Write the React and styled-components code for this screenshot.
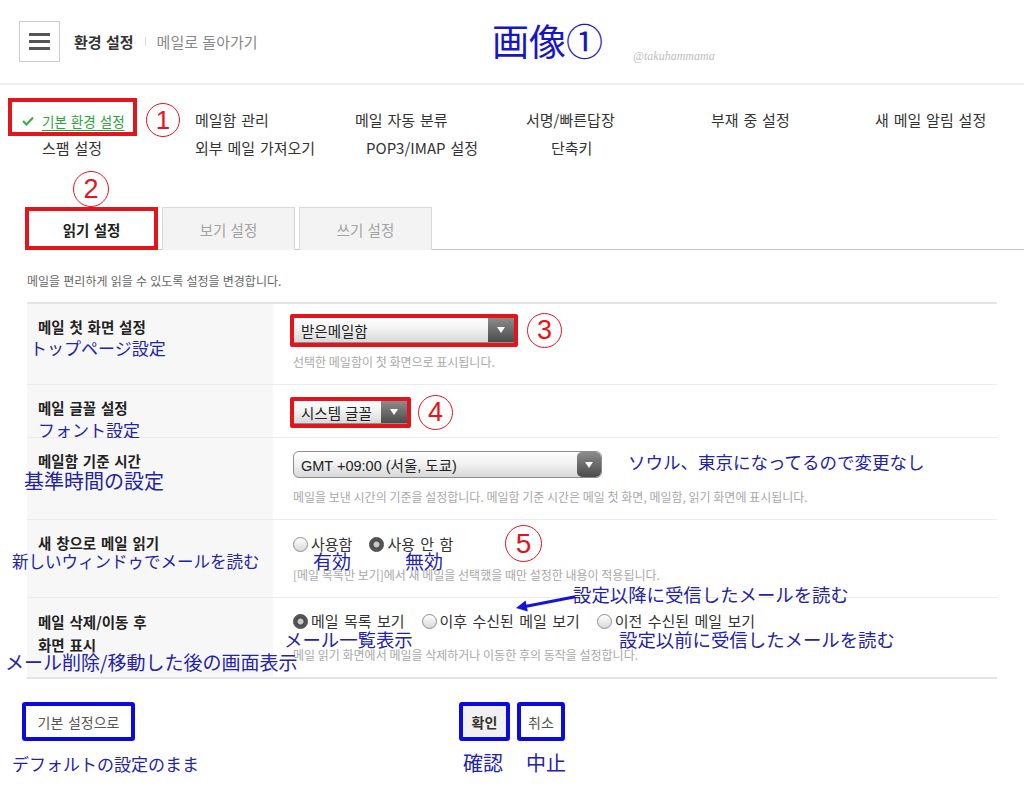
import React from "react"
import styled, { createGlobalStyle, css } from "styled-components"

const RED = "#e3141c"
const NOTE = "#2323a8"
const FRAME_BLUE = "#0a0ae0"

const GlobalStyle = createGlobalStyle`
  html, body { margin: 0; padding: 0; background: #fff; }
  body { font-family: "Noto Sans CJK KR", "Noto Sans", sans-serif; color: #333; }
  * { box-sizing: border-box; }
`

const navRows = [
  [
    { label: "기본 환경 설정", indent: 22, current: true },
    { label: "메일함 관리" },
    { label: "메일 자동 분류" },
    { label: "서명/빠른답장" },
    { label: "부재 중 설정" },
    { label: "새 메일 알림 설정" },
  ],
  [
    { label: "스팸 설정", indent: 42 },
    { label: "외부 메일 가져오기" },
    { label: "POP3/IMAP 설정", indent: 11 },
    { label: "단축키", indent: 25 },
  ],
]

export default function App() {
  return (
    <Page>
      <GlobalStyle />
      <Header>
        <MenuButton>
          <span />
          <span />
          <span />
        </MenuButton>
        <HeaderTitle>환경 설정</HeaderTitle>
        <HeaderSep />
        <BackLink>메일로 돌아가기</BackLink>
        <PageMark>画像①</PageMark>
        <Handle>@takuhammama</Handle>
      </Header>

      <Nav>
        {navRows.map((row, r) =>
          row.map((item, i) => (
            <NavItem key={`${r}-${i}`} $indent={item.indent || 0}>
              {item.current ? (
                <Current>
                  <svg width="12" height="10" viewBox="0 0 12 10">
                    <polyline points="1,5 4.5,8.5 11,1.5" fill="none" stroke="#3aa84a" strokeWidth="2" />
                  </svg>
                  <u>{item.label}</u>
                  <Circled $x={124} $y={-4} $size={34}>1</Circled>
                </Current>
              ) : (
                item.label
              )}
            </NavItem>
          ))
        )}
      </Nav>

      <TabBar>
        <Tab $active $marked>
          읽기 설정
          <Circled $x={47} $y={-37} $size={36}>2</Circled>
        </Tab>
        <Tab>보기 설정</Tab>
        <Tab>쓰기 설정</Tab>
      </TabBar>

      <Description>메일을 편리하게 읽을 수 있도록 설정을 변경합니다.</Description>

      <Table>
        <Row>
          <LabelCell>메일 첫 화면 설정</LabelCell>
          <ValueCell>
            <Framed>
              <Select $w={222} $h={26}>
                <SelectText>받은메일함</SelectText>
                <SelectArrow />
              </Select>
            </Framed>
            <Help $mt={10}>선택한 메일함이 첫 화면으로 표시됩니다.</Help>
          </ValueCell>
          <Note $x={3} $y={32} $size={17}>トップページ設定</Note>
          <Circled $x={500} $y={9} $size={35}>3</Circled>
        </Row>

        <Row>
          <LabelCell>메일 글꼴 설정</LabelCell>
          <ValueCell>
            <Framed $mt={2}>
              <Select $w={115} $h={24}>
                <SelectText>시스템 글꼴</SelectText>
                <SelectArrow />
              </Select>
            </Framed>
          </ValueCell>
          <Note $x={11} $y={33} $size={17}>フォント設定</Note>
          <Circled $x={391} $y={10} $size={35}>4</Circled>
        </Row>

        <Row>
          <LabelCell>메일함 기준 시간</LabelCell>
          <ValueCell>
            <Select $w={309} $h={27} $radius={6}>
              <SelectText>GMT +09:00 (서울, 도쿄)</SelectText>
              <SelectArrow $round />
            </Select>
            <Help $mt={10}>
              메일을 보낸 시간의 기준을 설정합니다. 메일함 기준 시간은 메일 첫 화면, 메일함, 읽기 화면에 표시됩니다.
            </Help>
          </ValueCell>
          <Note $x={-3} $y={31} $size={20}>基準時間の設定</Note>
          <Note $x={601} $y={12} $size={17.5}>ソウル、東京になってるので変更なし</Note>
        </Row>

        <Row>
          <LabelCell>새 창으로 메일 읽기</LabelCell>
          <ValueCell>
            <RadioGroup $mt={2}>
              <Radio>
                <RadioDot />
                사용함
              </Radio>
              <Radio>
                <RadioDot $checked />
                사용 안 함
              </Radio>
            </RadioGroup>
            <Help $mt={13}>[메일 목록만 보기]에서 새 메일을 선택했을 때만 설정한 내용이 적용됩니다.</Help>
          </ValueCell>
          <Note $x={-15} $y={29} $size={16.5}>新しいウィンドゥでメールを読む</Note>
          <Note $x={286} $y={29} $size={19}>有効</Note>
          <Note $x={378} $y={29} $size={19}>無効</Note>
          <Circled $x={478} $y={5} $size={37}>5</Circled>
        </Row>

        <Row>
          <LabelCell $pt={12}>
            메일 삭제/이동 후
            <br />
            화면 표시
          </LabelCell>
          <ValueCell>
            <RadioGroup $mt={1}>
              <Radio>
                <RadioDot $checked />
                메일 목록 보기
              </Radio>
              <Radio>
                <RadioDot />
                이후 수신된 메일 보기
              </Radio>
              <Radio>
                <RadioDot />
                이전 수신된 메일 보기
              </Radio>
            </RadioGroup>
            <Help $mt={16}>메일 읽기 화면에서 메일을 삭제하거나 이동한 후의 동작을 설정합니다.</Help>
          </ValueCell>
          <Note $x={-22} $y={52} $size={19}>メール削除/移動した後の画面表示</Note>
          <Note $x={257} $y={29} $size={18.4}>メール一覧表示</Note>
          <Note $x={546} $y={-16} $size={18.4}>設定以降に受信したメールを読む</Note>
          <Note $x={592} $y={29} $size={18.4}>設定以前に受信したメールを読む</Note>
          <Arrow width="66" height="24" viewBox="0 0 66 24">
            <line x1="62" y1="5" x2="13" y2="14.5" stroke="#1515d8" strokeWidth="3" strokeLinecap="round" />
            <polygon points="4,16 15.8,19.5 13.6,8.6" fill="#1515d8" />
          </Arrow>
        </Row>
      </Table>

      <Footer>
        <ButtonSlot>
          <Button $w={113}>기본 설정으로</Button>
          <Note $x={-10} $y={50} $size={17}>デフォルトの設定のまま</Note>
        </ButtonSlot>
        <Actions>
          <ButtonSlot>
            <Button $w={51} $primary>
              확인
            </Button>
            <Note $x={4} $y={49} $size={20}>確認</Note>
          </ButtonSlot>
          <ButtonSlot>
            <Button $w={48}>취소</Button>
            <Note $x={9} $y={49} $size={20}>中止</Note>
          </ButtonSlot>
        </Actions>
        <span />
      </Footer>
    </Page>
  )
}

const Page = styled.div`
  width: 1024px;
  min-height: 805px;
  background: #fff;
  position: relative;
`

const Header = styled.header`
  position: relative;
  height: 85px;
  display: flex;
  align-items: center;
  padding-left: 19px;
  border-bottom: 2px solid #eeeeee;
  font-size: 15px;
  word-spacing: 1px;
`

const MenuButton = styled.div`
  width: 41px;
  height: 41px;
  border: 1px solid #cccccc;
  display: flex;
  flex-direction: column;
  align-items: center;
  justify-content: center;
  gap: 4.5px;

  span {
    width: 21px;
    height: 2.5px;
    background: #555;
  }
`

const HeaderTitle = styled.span`
  margin-left: 14px;
  font-weight: 700;
  color: #333;
`

const HeaderSep = styled.span`
  width: 1px;
  height: 9px;
  background: #dddddd;
  margin: 0 11px;
`

const BackLink = styled.span`
  color: #888;
`

const PageMark = styled.span`
  position: absolute;
  left: 492px;
  top: 17px;
  font-family: "Noto Sans CJK JP", sans-serif;
  font-size: 37px;
  line-height: 46px;
  word-spacing: 0;
  color: #1616c6;
`

const Handle = styled.span`
  position: absolute;
  left: 633px;
  top: 49px;
  font-family: "Liberation Serif", serif;
  font-style: italic;
  font-size: 12px;
  word-spacing: 0;
  color: #bdbdbd;
`

const Nav = styled.nav`
  display: grid;
  grid-template-columns: 195px 160px 171px 185px 164px 1fr;
  grid-auto-rows: 28px;
  margin-top: 21px;
`

const NavItem = styled.div`
  padding-left: ${(p) => p.$indent}px;
  font-size: 15px;
  line-height: 28px;
  word-spacing: 1.5px;
  color: #333;
  white-space: nowrap;
`

const Current = styled.span`
  position: relative;
  display: inline-flex;
  align-items: center;
  gap: 8px;
  height: 28px;
  color: #2ea13f;
  font-size: 13.5px;
  word-spacing: 1px;

  u {
    text-decoration: underline;
    text-underline-offset: 3px;
  }

  &::after {
    content: "";
    position: absolute;
    left: -14px;
    top: -9px;
    right: -12px;
    bottom: -1px;
    border: 4px solid ${RED};
    pointer-events: none;
  }
`

const Circled = styled.span`
  position: absolute;
  left: ${(p) => p.$x}px;
  top: ${(p) => p.$y}px;
  width: ${(p) => p.$size}px;
  height: ${(p) => p.$size}px;
  border: 1.6px solid ${RED};
  border-radius: 50%;
  color: ${RED};
  font-family: "Liberation Sans", sans-serif;
  font-weight: 400;
  font-size: ${(p) => Math.round(p.$size * 0.76)}px;
  line-height: 1;
  word-spacing: 0;
  display: flex;
  align-items: center;
  justify-content: center;
  pointer-events: none;
`

const TabBar = styled.div`
  display: flex;
  gap: 4px;
  margin: 45px 0 0 25px;
  border-bottom: 1px solid #c6c6c6;
`

const Tab = styled.div`
  position: relative;
  width: 133px;
  height: 43px;
  margin-bottom: -1px;
  display: flex;
  align-items: center;
  justify-content: center;
  font-size: 14.5px;
  word-spacing: 1px;
  border: 1px solid #d9d9d9;
  border-bottom: none;
  background: ${(p) => (p.$active ? "#fff" : "#f3f3f3")};
  color: ${(p) => (p.$active ? "#222" : "#a2a2a2")};
  font-weight: ${(p) => (p.$active ? 700 : 400)};

  ${(p) =>
    p.$marked &&
    css`
      &::after {
        content: "";
        position: absolute;
        inset: -1px -1px 0 -1px;
        border: 4px solid ${RED};
        pointer-events: none;
      }
    `}
`

const Description = styled.p`
  margin: 22px 0 0 27px;
  font-size: 12px;
  line-height: 18px;
  color: #666;
  word-spacing: 0.5px;
`

const Table = styled.div`
  margin: 12px 0 0 27px;
  width: 970px;
  border-top: 2px solid #e4e4e4;
  border-bottom: 2px solid #e4e4e4;
`

const Row = styled.div`
  position: relative;
  display: grid;
  grid-template-columns: 246px 1fr;
  border-bottom: 1px solid #ececec;

  &:last-child {
    border-bottom: none;
  }
`

const LabelCell = styled.div`
  background: #f7f7f7;
  padding: ${(p) => p.$pt || 11}px 11px 11px;
  font-size: 14.5px;
  font-weight: 700;
  line-height: 23px;
  word-spacing: 1.5px;
  color: #222;
`

const ValueCell = styled.div`
  padding: 13px 20px;
`

const Framed = styled.div`
  position: relative;
  width: fit-content;
  margin-top: ${(p) => p.$mt || 0}px;

  &::after {
    content: "";
    position: absolute;
    inset: -3px -3px -4px -3px;
    border: 4px solid ${RED};
    border-radius: 2px;
    pointer-events: none;
  }
`

const Select = styled.div`
  display: flex;
  align-items: center;
  width: ${(p) => p.$w}px;
  height: ${(p) => p.$h}px;
  border: 1px solid #8e8e8e;
  border-radius: ${(p) => p.$radius || 1}px;
  background: linear-gradient(#ffffff, #f2f2f2 45%, #d8d8d8);
  font-family: "Liberation Sans", "Noto Sans CJK KR", sans-serif;
  font-size: 14.5px;
  color: #222;
  overflow: hidden;
`

const SelectText = styled.span`
  flex: 1;
  padding-left: 7px;
  white-space: nowrap;
`

const SelectArrow = styled.span`
  align-self: stretch;
  width: ${(p) => (p.$round ? 24 : 26)}px;
  background: linear-gradient(#8c8c8c, #4b4b4b);
  border-radius: ${(p) => (p.$round ? "5px" : "0")};
  display: flex;
  align-items: center;
  justify-content: center;

  &::before {
    content: "";
    border-left: 4px solid transparent;
    border-right: 4px solid transparent;
    border-top: 6px solid #fff;
  }
`

const Help = styled.div`
  margin-top: ${(p) => p.$mt}px;
  font-size: 12px;
  line-height: 18px;
  color: #a8a8a8;
  white-space: nowrap;
`

const RadioGroup = styled.div`
  display: flex;
  gap: 17px;
  margin-top: ${(p) => p.$mt}px;
  font-size: 15px;
  line-height: 18px;
  word-spacing: 2px;
  color: #333;
`

const Radio = styled.label`
  display: inline-flex;
  align-items: center;
  gap: 3px;
  white-space: nowrap;
`

const RadioDot = styled.span`
  width: 15px;
  height: 15px;
  border-radius: 50%;
  border: 1px solid ${(p) => (p.$checked ? "#444" : "#8d8d8d")};
  background: ${(p) =>
    p.$checked
      ? "radial-gradient(circle, #c8c8c8 0 2.5px, #4a4a4a 3.5px, #6a6a6a 100%)"
      : "linear-gradient(#ffffff, #d9d9d9)"};
`

const Note = styled.span`
  position: absolute;
  left: ${(p) => p.$x}px;
  top: ${(p) => p.$y}px;
  font-family: "Noto Sans CJK JP", sans-serif;
  font-size: ${(p) => p.$size}px;
  font-weight: 400;
  line-height: 24px;
  word-spacing: 0;
  color: ${NOTE};
  white-space: nowrap;
  pointer-events: none;
`

const Arrow = styled.svg`
  position: absolute;
  left: 485px;
  top: -6px;
`

const Footer = styled.div`
  display: grid;
  grid-template-columns: 1fr auto 1fr;
  padding: 0 22px;
  margin-top: 23px;
`

const Actions = styled.div`
  display: flex;
  gap: 7px;
`

const ButtonSlot = styled.div`
  position: relative;
  width: fit-content;
`

const Button = styled.button`
  width: ${(p) => p.$w}px;
  height: 39px;
  padding: 0;
  border: 4px solid ${FRAME_BLUE};
  border-radius: 3px;
  background: ${(p) => (p.$primary ? "#f0f0f0" : "#fff")};
  font-family: "Noto Sans CJK KR", sans-serif;
  font-size: 14px;
  word-spacing: 1.5px;
  font-weight: ${(p) => (p.$primary ? 700 : 400)};
  color: ${(p) => (p.$primary ? "#333" : "#555")};
`
